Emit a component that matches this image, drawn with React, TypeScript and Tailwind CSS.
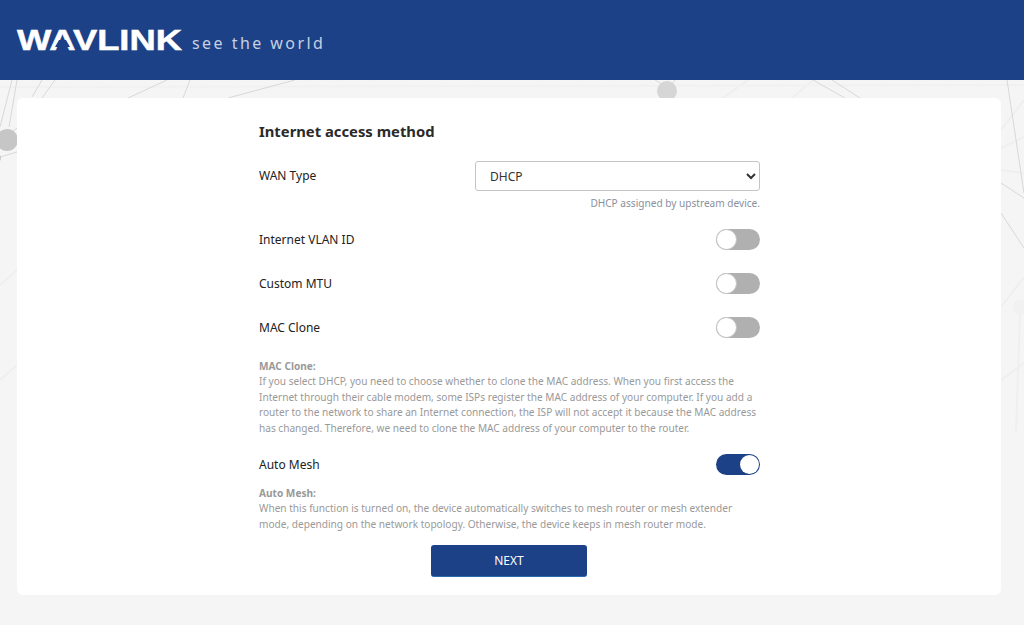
import React from 'react';

const Toggle = ({ on = false }: { on?: boolean }) => (
  <div
    className={`flex h-[21px] w-[44px] shrink-0 rounded-full ${
      on ? 'justify-end bg-[#1c4187] p-px' : 'justify-start bg-[#b0b0b0]'
    }`}
  >
    <span className={`rounded-full bg-white ${on ? 'h-[19px] w-[19px]' : 'h-[21px] w-[21px] border border-[#c4c4c4]'}`} />
  </div>
);

const Row = ({ label, on, className }: { label: string; on?: boolean; className: string }) => (
  <div className={`flex h-[21px] items-center justify-between text-[12px] text-[#222] ${className}`}>
    <span>{label}</span>
    <Toggle on={on} />
  </div>
);

// faint network drawing behind the card, y is relative to the bottom of the header
const Backdrop = () => (
  <svg className="pointer-events-none absolute inset-0 h-full w-full" viewBox="0 0 1024 545" fill="none">
    <g stroke="#efefef" strokeWidth="2">
      <path d="M748 0 L723 18 M813 0 L792 18 M1001 50 L1024 20 M1001 68 L1024 57 M1001 90 L1024 93" />
      <path d="M1001 227 L1024 197 M1001 300 L1024 283 M1020 233 L1016 353 M0 205 L17 190 M0 300 L17 285" />
      <path d="M0 7 L1024 5" stroke="#f1f1f1" />
    </g>
    <g stroke="#d8d8d8" strokeWidth="1">
      <path d="M12 0 L0 47 M17 0 L9 47 M42 0 L32 17 M55 0 L42 18 M17 48 L11 53 M17 72 L0 77" />
      <path d="M167 0 L128 18 M190 0 L183 18 M295 0 L228 18" />
      <path d="M655 0 L663 5 M675 0 L672 4" />
      <path d="M813 0 L845 18 M832 0 L860 18" />
      <path d="M1007 0 L1024 113 M1001 103 L1024 118 M1001 133 L1024 168" />
    </g>
    <circle cx="1021" cy="227" r="8" fill="#f1f1f1" />
    <circle cx="7" cy="60" r="11" fill="#c6c6c6" />
    <circle cx="-4" cy="78" r="5" fill="#c6c6c6" />
    <circle cx="667" cy="11" r="10" fill="#d6d6d6" />
  </svg>
);

const Logo = () => (
  <div className="flex items-center gap-[9px]">
    <svg width="166" height="26" viewBox="0 0 166 26" className="overflow-visible" aria-label="WAVLINK">
      <text
        x="0"
        y="23"
        fontFamily="'Liberation Sans', sans-serif"
        fontWeight="700"
        fontSize="29"
        fill="#fff"
        stroke="#fff"
        strokeWidth="0.5"
        textLength="165"
        lengthAdjust="spacingAndGlyphs"
      >
        WAVLINK
      </text>
      {/* the logo's A has no crossbar */}
      <polygon points="42,13 49,13 53,20 38,20" fill="#1c4187" />
    </svg>
    <span className="pt-[5px] text-[16px] tracking-[2.45px] text-[#c6d0e2] font-['Noto_Sans',sans-serif]">see the world</span>
  </div>
);

export default function App() {
  return (
    <div className="flex h-[625px] w-[1024px] flex-col overflow-hidden bg-[#f5f5f5] font-['Noto_Sans',sans-serif]">
      <header className="flex h-20 shrink-0 items-center bg-[#1c4187] pl-[17px]">
        <Logo />
      </header>

      <main className="relative flex-1 pr-[23px] pl-[17px] pt-[18px]">
        <Backdrop />
        <div className="relative h-[497px] rounded-md bg-white pt-[23px] pl-[242px]">
          <div className="w-[501px]">
            <h1 className="text-[14.8px] leading-5 font-bold text-[#2a2a2a]">Internet access method</h1>

            <div className="mt-[20px] flex h-[30px] items-center justify-between text-[12px] text-[#222]">
              <span>WAN Type</span>
              <select className="h-[30px] w-[285px] rounded-[3px] border border-[#c4c4c4] bg-white pl-[10px] text-[12px] text-[#333]">
                <option>DHCP</option>
              </select>
            </div>
            <p className="mt-[4px] text-right text-[10.1px] leading-4 text-[#8a8f9c]">DHCP assigned by upstream device.</p>

            <Row label="Internet VLAN ID" className="mt-[18px]" />
            <Row label="Custom MTU" className="mt-[23px]" />
            <Row label="MAC Clone" className="mt-[23px]" />

            <div className="mt-[21px] text-[10.1px] leading-[15.4px] text-[#999]">
              <p className="font-bold">MAC Clone:</p>
              <p>
                If you select DHCP, you need to choose whether to clone the MAC address. When you first access the Internet
                through their cable modem, some ISPs register the MAC address of your computer. If you add a router to the
                network to share an Internet connection, the ISP will not accept it because the MAC address has changed.
                Therefore, we need to clone the MAC address of your computer to the router.
              </p>
            </div>

            <Row label="Auto Mesh" on className="mt-[18px]" />

            <div className="mt-[11px] text-[10.1px] leading-[15.4px] text-[#999]">
              <p className="font-bold">Auto Mesh:</p>
              <p>
                When this function is turned on, the device automatically switches to mesh router or mesh extender mode,
                depending on the network topology. Otherwise, the device keeps in mesh router mode.
              </p>
            </div>

            <button className="mt-[13px] ml-[172px] block h-8 w-[156px] rounded-[3px] border-b border-[#2b6cb0] bg-[#1c4187] pt-px text-[12px] text-white">
              NEXT
            </button>
          </div>
        </div>
      </main>
    </div>
  );
}
